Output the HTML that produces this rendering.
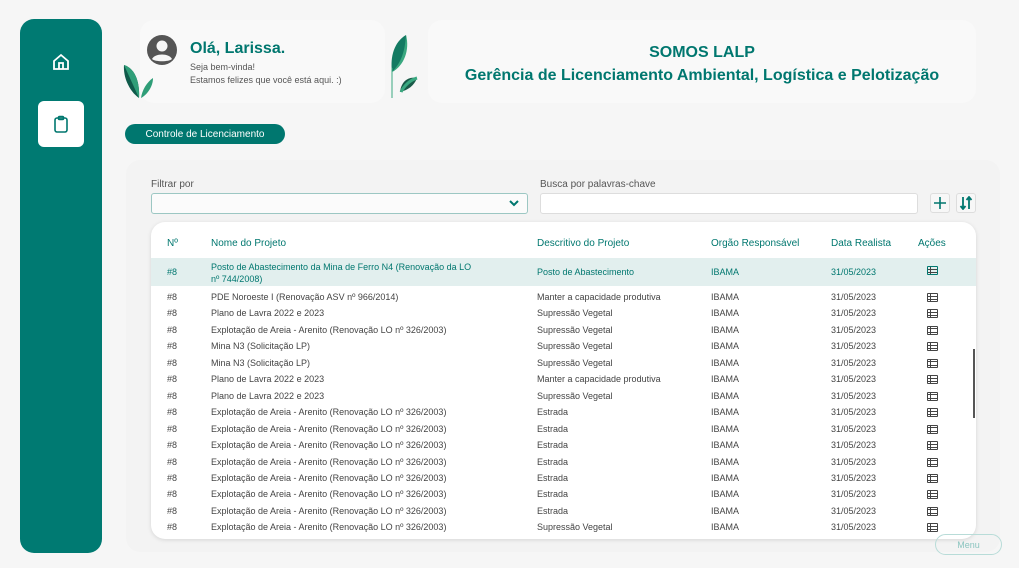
<!DOCTYPE html>
<html><head><meta charset="utf-8"><style>
*{margin:0;padding:0;box-sizing:border-box}
body{width:1019px;height:568px;background:#f6f6f6;font-family:"Liberation Sans",sans-serif;position:relative;overflow:hidden;color:#444}
.abs{position:absolute}
.side{left:20px;top:19px;width:82px;height:534px;background:#007a72;border-radius:14px}
.card{background:#f9f9f9;border-radius:14px}
.teal{color:#00776f}
.t{position:absolute;font-size:9px;white-space:nowrap}
.ic{position:absolute;left:776px;width:11px;height:9px;border:1.5px solid #444;border-radius:1px}
.ic:before{content:"";position:absolute;left:2px;top:0;bottom:0;border-left:1.5px solid #444}
.ic:after{content:"";position:absolute;left:0;right:0;top:1.5px;height:2.5px;border-top:1.2px solid #444;border-bottom:1.2px solid #444}
</style></head><body>
<div class="abs side"></div>
<svg class="abs" style="left:51px;top:52px" width="20" height="20" viewBox="0 0 20 20" fill="none" stroke="#fff" stroke-width="1.8"><path d="M3 9L10 3L17 9V17H3Z"/><path d="M8 17V11H12V17"/></svg>
<div class="abs" style="left:38px;top:101px;width:46px;height:46px;background:#fff;border-radius:6px"></div>
<svg class="abs" style="left:51px;top:114px" width="20" height="20" viewBox="0 0 20 20" fill="none" stroke="#00776f" stroke-width="1.6"><rect x="4" y="4" width="12" height="14" rx="2"/><rect x="7.5" y="2.5" width="5" height="3" rx="1"/></svg>

<div class="abs card" style="left:140px;top:20px;width:245px;height:83px"></div>
<div class="abs card" style="left:428px;top:20px;width:548px;height:83px"></div>
<svg class="abs" style="left:147px;top:35px" width="30" height="30" viewBox="0 0 30 30"><circle cx="15" cy="15" r="15" fill="#555"/><circle cx="15" cy="11" r="5.5" fill="#f7f7f7"/><path d="M5 24C8 18 22 18 25 24C22 27 8 27 5 24Z" fill="#f7f7f7"/></svg>
<svg class="abs" style="left:120px;top:60px" width="40" height="40" viewBox="0 0 40 40"><path d="M4 5C14 8 20 20 19 38C10 32 3 18 4 5Z" fill="#0f5a4a"/><path d="M4 5C14 8 20 20 19 38" fill="#2f9e78"/><path d="M33 18C27 22 22 30 21 38C28 34 33 26 33 18Z" fill="#2f9e78"/></svg>
<svg class="abs" style="left:380px;top:32px" width="42" height="68" viewBox="0 0 42 68"><path d="M26 3C14 10 10 25 12 40C24 34 28 18 26 3Z" fill="#137a62"/><path d="M26 3C30 18 24 34 12 40C22 30 25 18 26 3Z" fill="#3aa880"/><line x1="12" y1="36" x2="12" y2="66" stroke="#3aa880"/><path d="M37 46C28 44 21 50 20 60C28 58 34 54 37 46Z" fill="#1a5a48"/><path d="M37 46C30 48 24 54 21 60" stroke="#3aa880" stroke-width="3" fill="none"/></svg>
<div class="t teal" style="left:190px;top:40px;font-size:16px;font-weight:bold">Olá, Larissa.</div>
<div class="t" style="left:190px;top:62px;color:#555">Seja bem-vinda!</div>
<div class="t" style="left:190px;top:75px;color:#555">Estamos felizes que você está aqui. :)</div>
<div class="abs teal" style="left:428px;width:548px;top:41px;text-align:center;font-weight:bold;font-size:16px;line-height:23px">SOMOS LALP<br>Gerência de Licenciamento Ambiental, Logística e Pelotização</div>

<div class="abs" style="left:125px;top:124px;width:160px;height:20px;background:#00776f;border-radius:10px;color:#fff;font-size:10px;display:flex;align-items:center;justify-content:center">Controle de Licenciamento</div>

<div class="abs" style="left:126px;top:160px;width:874px;height:392px;background:#f3f3f3;border-radius:14px"></div>
<div class="t" style="left:151px;top:179px;font-size:10px;color:#555">Filtrar por</div>
<div class="abs" style="left:151px;top:193px;width:377px;height:21px;background:#fbfbfb;border:1px solid #9cc7c3;border-radius:3px"></div>
<svg class="abs" style="left:509px;top:199px" width="10" height="8" viewBox="0 0 10 8"><path d="M1 2L5 6L9 2" stroke="#00776f" stroke-width="2" fill="none"/></svg>
<div class="t" style="left:540px;top:179px;font-size:10px;color:#555">Busca por palavras-chave</div>
<div class="abs" style="left:540px;top:193px;width:378px;height:21px;background:#fff;border:1px solid #ddd;border-radius:3px"></div>
<div class="abs" style="left:930px;top:193px;width:20px;height:20px;background:#f7f7f7;border:1px solid #ddd;border-radius:3px"></div>
<svg class="abs" style="left:933px;top:196px" width="14" height="14"><path d="M7 1V13M1 7H13" stroke="#00776f" stroke-width="1.6"/></svg>
<div class="abs" style="left:956px;top:193px;width:20px;height:20px;background:#f7f7f7;border:1px solid #ddd;border-radius:3px"></div>
<svg class="abs" style="left:959px;top:196px" width="14" height="14"><path d="M4 1V13M1.5 10L4 13L6.5 10M10 13V1M7.5 4L10 1L12.5 4" stroke="#00776f" stroke-width="1.8" fill="none"/></svg>

<div class="abs" style="left:151px;top:222px;width:825px;height:317px;background:#fff;border-radius:14px;box-shadow:0 1px 4px rgba(0,0,0,.12);overflow:hidden">
<div class="t teal" style="left:16px;top:16px;font-size:10px">Nº</div>
<div class="t teal" style="left:60px;top:16px;font-size:10px">Nome do Projeto</div>
<div class="t teal" style="left:386px;top:16px;font-size:10px">Descritivo do Projeto</div>
<div class="t teal" style="left:560px;top:16px;font-size:10px">Orgão Responsável</div>
<div class="t teal" style="left:680px;top:16px;font-size:10px">Data Realista</div>
<div class="t teal" style="left:767px;top:16px;font-size:10px">Ações</div>
<div class="abs" style="left:0;top:36px;width:825px;height:28px;background:#e2efee"></div>
<div class="t teal" style="left:16px;top:45px">#8</div>
<div class="t teal" style="left:60px;top:39px;line-height:12px">Posto de Abastecimento da Mina de Ferro N4 (Renovação da LO<br>nº 744/2008)</div>
<div class="t teal" style="left:386px;top:45px">Posto de Abastecimento</div>
<div class="t teal" style="left:560px;top:45px">IBAMA</div>
<div class="t teal" style="left:680px;top:45px">31/05/2023</div>
<div class="ic" style="top:44px;border-color:#00776f"></div>
<div class="abs" style="left:822px;top:127px;width:2px;height:69px;background:#555"></div>
<div id="rows"></div>
</div>
<div class="abs" style="left:935px;top:534px;width:67px;height:21px;border:1px solid #b8dcd8;border-radius:11px;color:#8cc5c0;font-size:9px;display:flex;align-items:center;justify-content:center">Menu</div>
<script>
var d=[["PDE Noroeste I (Renovação ASV nº 966/2014)","Manter a capacidade produtiva"],["Plano de Lavra 2022 e 2023","Supressão Vegetal"],["Explotação de Areia - Arenito (Renovação LO nº 326/2003)","Supressão Vegetal"],["Mina N3 (Solicitação LP)","Supressão Vegetal"],["Mina N3 (Solicitação LP)","Supressão Vegetal"],["Plano de Lavra 2022 e 2023","Manter a capacidade produtiva"],["Plano de Lavra 2022 e 2023","Supressão Vegetal"]];
var E="Explotação de Areia - Arenito (Renovação LO nº 326/2003)";
for(var i=0;i<7;i++)d.push([E,"Estrada"]);d.push([E,"Supressão Vegetal"]);
var h="";d.forEach(function(r,i){var y=70+i*16.45;
h+='<div class="t" style="left:16px;top:'+y+'px">#8</div><div class="t" style="left:60px;top:'+y+'px">'+r[0]+'</div><div class="t" style="left:386px;top:'+y+'px">'+r[1]+'</div><div class="t" style="left:560px;top:'+y+'px">IBAMA</div><div class="t" style="left:680px;top:'+y+'px">31/05/2023</div><div class="ic" style="top:'+(y+1)+'px"></div>';});
document.getElementById("rows").outerHTML=h;
</script>
</body></html>
